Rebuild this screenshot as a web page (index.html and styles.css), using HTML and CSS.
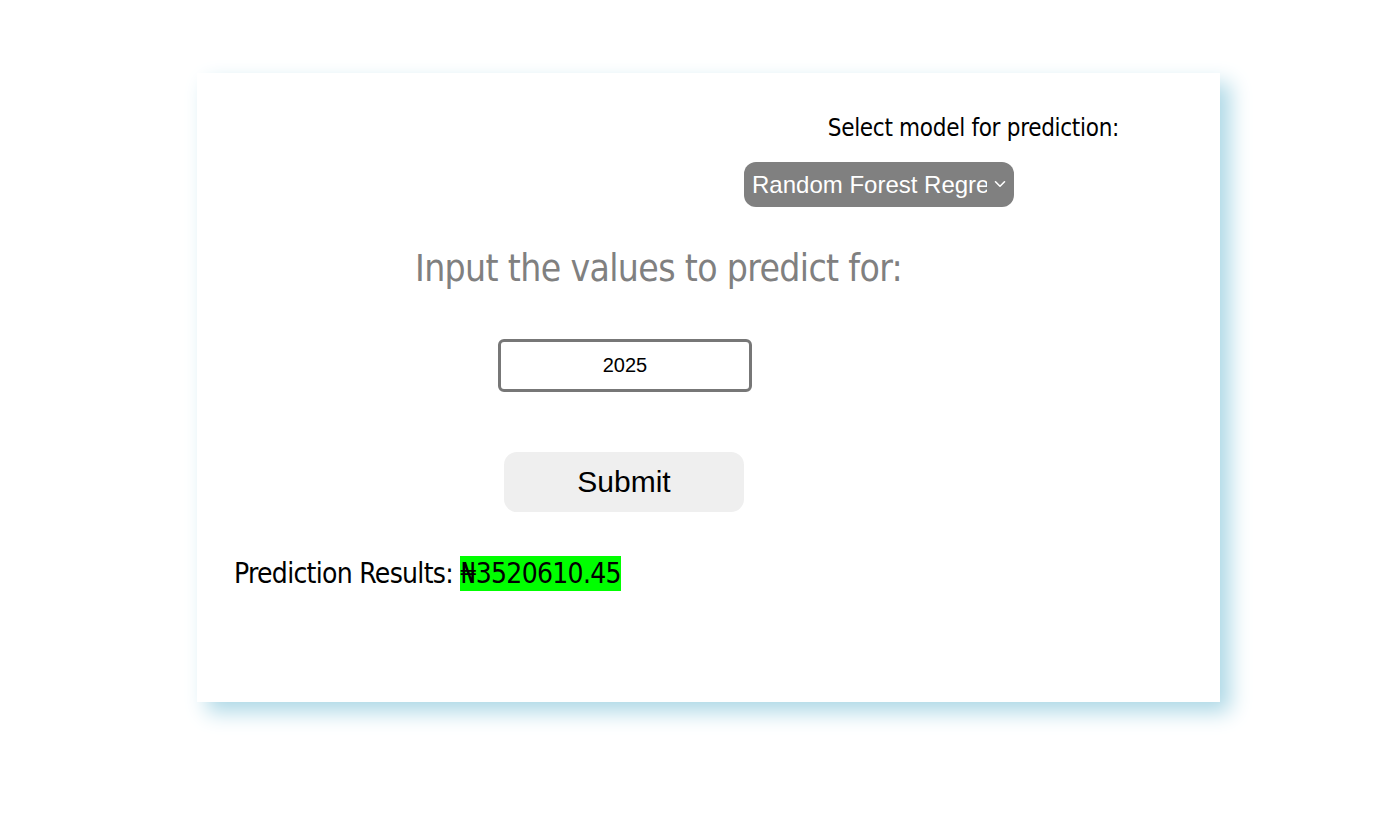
FILE: index.html
```html
<!DOCTYPE html>
<html>
<head>
<meta charset="utf-8">
<title>Prediction</title>
<link rel="stylesheet" href="styles.css">
</head>
<body>
<div class="card">
  <div class="model">
    <label class="model-label" for="model">Select model for prediction:</label>
    <span class="select-wrap">
      <select id="model" class="model-select">
        <option>Random Forest Regressor</option>
        <option>Linear Regression</option>
      </select>
      <svg class="chevron" width="12" height="8" viewBox="0 0 12 8" aria-hidden="true">
        <path d="M1.5 1.8 L6 6.2 L10.5 1.8" fill="none" stroke="#ffffff" stroke-width="1.6" stroke-linecap="round" stroke-linejoin="round"/>
      </svg>
    </span>
  </div>
  <h2 class="heading">Input the values to predict for:</h2>
  <div class="form">
    <input class="year-input" type="text" value="2025">
    <button class="submit-btn" type="button">Submit</button>
  </div>
  <p class="result">Prediction Results: <span class="result-value">₦3520610.45</span></p>
</div>
</body>
</html>
```

FILE: styles.css
```css
html, body {
  margin: 0;
  padding: 0;
  background: #ffffff;
}

body {
  min-height: 834px;
  padding-top: 73px;
  box-sizing: border-box;
  font-family: "DejaVu Sans Condensed", "DejaVu Sans", sans-serif;
  font-stretch: condensed;
}

.card {
  box-sizing: border-box;
  width: 1023px;
  height: 629px;
  margin: 0 0 0 197px;
  padding-top: 40px;
  background: #ffffff;
  box-shadow: 10px 10px 20px #add8e6;
}

.model {
  display: flex;
  flex-direction: column;
  align-items: flex-end;
  padding-right: 101px;
}

.model-label {
  font-size: 24px;
  line-height: 28px;
  letter-spacing: -0.3px;
  color: #000000;
  padding-top: 1px;
}

.select-wrap {
  position: relative;
  display: block;
  margin-top: 20px;
  margin-right: 105px;
  width: 270px;
  height: 45px;
}

.model-select {
  appearance: none;
  -webkit-appearance: none;
  display: block;
  box-sizing: border-box;
  width: 270px;
  height: 45px;
  padding: 0 27px 0 8px;
  border: none;
  border-radius: 12px;
  background: #808080;
  color: #ffffff;
  font-family: "Liberation Sans", Arial, sans-serif;
  font-size: 24px;
  outline: none;
}

.chevron {
  position: absolute;
  left: 250px;
  top: 18px;
  pointer-events: none;
}

.heading {
  margin: 40px 0 0 218px;
  font-size: 37px;
  line-height: 44px;
  letter-spacing: -0.65px;
  font-weight: normal;
  color: #808080;
}

.form {
  display: flex;
  flex-direction: column;
  align-items: flex-start;
  margin-top: 48px;
}

.year-input {
  box-sizing: border-box;
  margin-left: 301px;
  width: 254px;
  height: 53px;
  padding: 0;
  border: 3px solid #777777;
  border-radius: 6px;
  text-align: center;
  font-family: "Liberation Sans", Arial, sans-serif;
  font-size: 20px;
  color: #000000;
  outline: none;
}

.submit-btn {
  margin: 60px 0 0 307px;
  width: 240px;
  height: 60px;
  border: none;
  border-radius: 13px;
  background: #efefef;
  font-family: "Liberation Sans", Arial, sans-serif;
  font-size: 30px;
  color: #000000;
}

.result {
  margin: 45px 0 0 37px;
  font-size: 28px;
  letter-spacing: -0.7px;
  color: #000000;
}

.result-value {
  background: #00ff00;
  padding: 1px 0;
}
```
